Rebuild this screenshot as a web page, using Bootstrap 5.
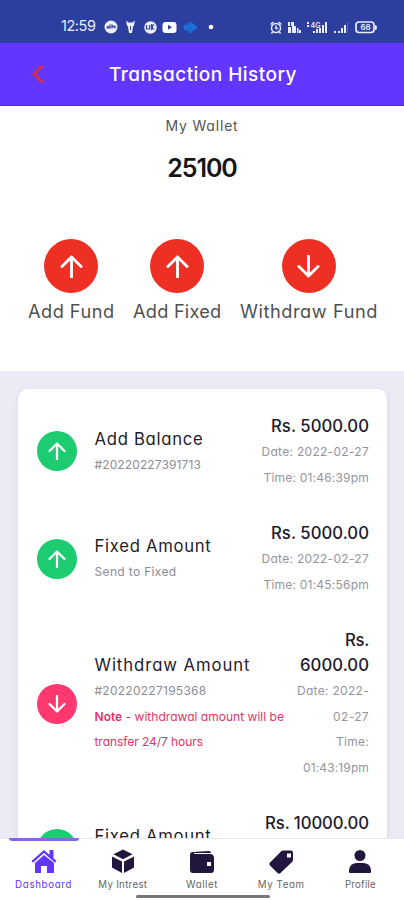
<!DOCTYPE html>
<html lang="en">
<head>
<meta charset="utf-8">
<meta name="viewport" content="width=device-width, initial-scale=1">
<title>Transaction History</title>
<link href="https://cdn.jsdelivr.net/npm/bootstrap@5.3.0/dist/css/bootstrap.min.css" rel="stylesheet">
<style>
body{font-family:Inter,"Open Sans",sans-serif;font-feature-settings:"cv11","ss03";background:#ebebf5;height:900px;overflow:hidden;color:#1c1b25}
svg{display:block;flex:none}
.status{height:43px;background:#2d3f9e;padding:10px 24px 0 61px;color:#e9ecff}
.clock{font-size:14.5px;line-height:20px;width:43px;padding-top:6px}
.appbar{height:63px;background:#6236ff;border-bottom:1px solid #4b20dd;padding:0 31px}
.appbar h1{font-size:19px;font-weight:500;line-height:24px;color:#fff;width:188px;margin-left:65px;padding-top:1px}
.wallet{height:265px;padding-top:10px;background:#fff}
.wlabel{font-size:14px;line-height:20px;color:#555}
.total{font-size:25px;font-weight:600;line-height:36px;margin-top:14px;color:#151515}
.actions{padding:0 26px 0 28px;margin-top:53px}
.round{border-radius:50%;display:flex;align-items:center;justify-content:center;flex:none}
.round.big{width:54px;height:54px;background:#ee2f24}
.round.mini{width:40px;height:40px;background:#1dcc70;margin-right:18px}
.round.mini.pink{background:#ff396f}
.alabel{font-size:18.2px;line-height:24px;color:#505050;margin-top:6px}
.history{margin:18px 17px 0 18px;border-radius:10px;padding:24.5px 18px 0 18.5px;background:#fff;height:511px;overflow:hidden;box-shadow:0 2px 5px rgba(60,50,110,.12)}
.entry{margin-bottom:31.5px}
.ttl{font-size:16.7px;line-height:25px;color:#1f1b29;padding-top:1px}
.ref{font-size:12px;line-height:25.5px;color:#8c8b96}
.ref.note-text{color:#e23367;width:196px}
.amount{font-size:16.7px;font-weight:500;line-height:24.7px;color:#211b2d}
.when{font-size:12px;line-height:25.5px;color:#95949c;position:relative;top:1px}
.narrow{width:74px}
.tabs{height:62px;background:#fff;border-top:1px solid #e6e5ee;padding:0 4px}
.tab{color:#666;font-size:9.7px;line-height:14px;padding-top:9px}
.tab svg{margin:0 auto 3px;color:#22163f}
.tab.current,.tab.current svg{color:#6236ff}
.marker{left:5px;top:-1px;width:70px;height:3px;border-radius:0 0 6px 6px;background:#8565f2}
.homebar{left:136px;bottom:2px;width:134px;height:3px;border-radius:2px;background:#777}
</style>
<script src="https://cdn.jsdelivr.net/npm/bootstrap@5.3.0/dist/js/bootstrap.bundle.min.js"></script>
</head>
<body>
<svg width="0" height="0" class="position-absolute"><defs>
<symbol id="up" viewBox="0 0 24 24"><path d="M12 23V2M2 12L12 2l10 10" fill="none" stroke="#fff" stroke-width="3" stroke-linecap="round" stroke-linejoin="round"/></symbol>
<symbol id="down" viewBox="0 0 24 24"><path d="M12 1v21M2 12l10 10 10-10" fill="none" stroke="#fff" stroke-width="3" stroke-linecap="round" stroke-linejoin="round"/></symbol>
</defs></svg>

<div class="status d-flex">
  <div class="clock"><span data-w="34.5">12:59</span></div>
  <svg width="112" height="18" viewBox="104 17 112 18" class="mt-2">
    <circle cx="111" cy="26" r="6.5" fill="#eef0ff"/><path d="M107 27.500q1-4 2 0m1-4v4m2-4v4m0-2h3v2" fill="none" stroke="#334593" stroke-width="1.300"/>
    <path d="M126 19.500l2.500 2h4l2.500-2-1 5-1 1-1 6.500h-3l-1-6.500-1-1z" fill="#eef0ff"/><path d="M130.500 25v4" stroke="#334593"/>
    <circle cx="150.500" cy="26.500" r="6.200" fill="#eef0ff"/><path d="M146.500 24v4h3v-4m2-1v6m3-5h-2v4h2" fill="none" stroke="#334593" stroke-width="1.200"/>
    <rect x="162.500" y="21" width="14" height="11" rx="3" fill="#fff"/><path d="M168 23.800v5l4-2.500z" fill="#334593"/>
    <path d="M185 25v3M187.700 23.500v5.500M190.400 22v9M193 23.500v5.500M195.500 25.500v2" stroke="#1c74e4" stroke-width="2.400" stroke-linecap="round"/>
    <circle cx="211" cy="26" r="2.300" fill="#fff"/>
  </svg>
  <svg width="112" height="18" viewBox="270 17 112 18" class="mt-2 ms-auto">
    <g fill="none" stroke="#e9ecff" stroke-width="1.500"><circle cx="278" cy="27" r="4.500"/><path d="M278 24.500v3h2M272.500 23.500l3-2.500m8 2.500l-3-2.500M274.500 31l-1 1.500m8-1.500l1 1.500"/></g>
    <g fill="#e9ecff"><path d="M290 21h2v4h-2zm3 0h3v4h-3zM290 26h3v6h-3zm4-1h4v7h-4zm5 2h1.500v5H299zm2 2h2v3h-2z"/>
    <path d="M309 21h2v2h-2zm0 3h2v2h-2zM315 30h2v2h-2zm3-2h2v4h-2zm3-1h2v5h-2zm3-3h2v8h-2zm3-3h2v11h-2z"/>
    <path d="M336 30h2v2h-2zm4 0h2v2h-2zm3-3h2v5h-2zm3-3h2v8h-2z"/><path d="M349 21h.6v11h-.6z" opacity=".4"/></g>
    <text x="312.500" y="26.500" font-size="7" font-weight="600" fill="#e9ecff">4G</text>
    <rect x="358" y="21" width="18" height="10.500" rx="3" fill="none" stroke="#e9ecff" stroke-width="1.700"/><path d="M377 24q2 0 2 2.500t-2 2.500z" fill="#e9ecff"/>
    <text x="362.500" y="29.300" font-size="8" font-weight="600" fill="#e9ecff">68</text>
  </svg>
</div>
<header class="appbar d-flex align-items-center">
  <svg width="13" height="22" viewBox="0 0 13 22"><path d="M11.500 2.500L3 11l8.500 8.500" fill="none" stroke="#d32c4c" stroke-width="3"/></svg>
  <h1 class="mb-0 text-nowrap"><span data-w="188">Transaction History</span></h1>
</header>
<section class="wallet text-center">
  <div class="wlabel"><span data-w="73">My Wallet</span></div>
  <div class="total"><span data-w="69.5">25100</span></div>
  <div class="actions d-flex justify-content-between text-nowrap">
    <div><div class="round big mx-auto"><svg width="23" height="23"><use href="#up"/></svg></div><div class="alabel"><span data-w="86.5">Add Fund</span></div></div>
    <div><div class="round big mx-auto"><svg width="23" height="23"><use href="#up"/></svg></div><div class="alabel"><span data-w="88.5">Add Fixed</span></div></div>
    <div><div class="round big mx-auto"><svg width="23" height="23"><use href="#down"/></svg></div><div class="alabel"><span data-w="138">Withdraw Fund</span></div></div>
  </div>
</section>
<main class="history">
  <div class="entry d-flex align-items-center text-nowrap">
    <div class="round mini"><svg width="18" height="18"><use href="#up"/></svg></div>
    <div><div class="ttl"><span data-w="109">Add Balance</span></div><div class="ref"><span data-w="106.5">#20220227391713</span></div></div>
    <div class="ms-auto text-end"><div class="amount"><span data-w="98">Rs. 5000.00</span></div><div class="when"><span data-w="107.5">Date: 2022-02-27</span></div><div class="when"><span data-w="105.5">Time: 01:46:39pm</span></div></div>
  </div>
  <div class="entry d-flex align-items-center text-nowrap">
    <div class="round mini"><svg width="18" height="18"><use href="#up"/></svg></div>
    <div><div class="ttl"><span data-w="117">Fixed Amount</span></div><div class="ref"><span data-w="82">Send to Fixed</span></div></div>
    <div class="ms-auto text-end"><div class="amount"><span data-w="98">Rs. 5000.00</span></div><div class="when"><span data-w="107.5">Date: 2022-02-27</span></div><div class="when"><span data-w="105.5">Time: 01:45:56pm</span></div></div>
  </div>
  <div class="entry d-flex align-items-center text-nowrap">
    <div class="round mini pink"><svg width="18" height="18"><use href="#down"/></svg></div>
    <div><div class="ttl"><span data-w="156">Withdraw Amount</span></div><div class="ref"><span data-w="112">#20220227195368</span></div><div class="ref note-text"><span data-w="189.5"><span class="fw-semibold">Note</span> - withdrawal amount will be</span><br><span data-w="108.5">transfer 24/7 hours</span></div></div>
    <div class="ms-auto text-end narrow"><div class="amount"><span data-w="24">Rs.</span><br><span data-w="69">6000.00</span></div><div class="when"><span data-w="72">Date: 2022-</span><br><span data-w="36">02-27</span></div><div class="when"><span data-w="33">Time:</span><br><span data-w="66">01:43:19pm</span></div></div>
  </div>
  <div class="entry d-flex align-items-center text-nowrap">
    <div class="round mini"><svg width="18" height="18"><use href="#up"/></svg></div>
    <div><div class="ttl"><span data-w="117">Fixed Amount</span></div><div class="ref"><span data-w="82">Send to Fixed</span></div></div>
    <div class="ms-auto text-end"><div class="amount"><span data-w="104">Rs. 10000.00</span></div><div class="when">&nbsp;</div><div class="when">&nbsp;</div></div>
  </div>
</main>
<nav class="tabs fixed-bottom d-flex text-center text-nowrap">
  <div class="marker position-absolute ms-1"></div>
  <div class="tab current col"><svg width="28" height="27" viewBox="0 0 28 27"><path fill="currentColor" d="M14 2L1.500 13l1.500 1.700L14 5l11 9.700 1.500-1.700-3-2.700V2h-4v4.700zM14 7l-9 8v10h6v-7h6v7h7V15z"/></svg><span data-w="57">Dashboard</span></div>
  <div class="tab col"><svg width="26" height="27" viewBox="0 0 26 27"><path fill="currentColor" d="M13 1.500l9.500 4.700-9.500 5-9.500-5zM2 8.500l10 5v11.500L2 19.500zm22 0l-10 5v11.500l10-5.500z"/></svg><span data-w="49">My Intrest</span></div>
  <div class="tab col"><svg width="28" height="27" viewBox="0 0 28 27"><path fill="currentColor" fill-rule="evenodd" d="M5 4l16-1q2 0 2 2H6v1h16q4 0 4 4v12q0 3-3 3H5q-3 0-3-3V7q0-3 3-3zm14 10v4h4v-4z"/></svg><span data-w="32">Wallet</span></div>
  <div class="tab col"><svg width="28" height="27" viewBox="0 0 28 27"><path fill="currentColor" fill-rule="evenodd" d="M16 2.500h8q2 0 2 2v7q0 1.500-1 2.500L13.500 25q-1.500 1.500-3 0L3 17.500q-1.500-1.500 0-3L14 3.500q1-1 2-1zm4 3v4h4v-4z"/></svg><span data-w="47">My Team</span></div>
  <div class="tab col"><svg width="26" height="27" viewBox="0 0 26 27"><circle cx="13" cy="7.500" r="5.500" fill="currentColor"/><path fill="currentColor" d="M2 24v-2q1-7 8-7h6q7 0 8 7v2q0 1-1 1H3q-1 0-1-1"/></svg><span data-w="31">Profile</span></div>
  <div class="homebar position-absolute"></div>
</nav>
<script>
// Tracks each label so that it fills its designed width.
document.querySelectorAll('[data-w]').forEach(function (el) {
  el.style.letterSpacing = '0px';
  var gap = (Number(el.dataset.w) - el.getBoundingClientRect().width) / el.textContent.length;
  el.style.letterSpacing = gap.toFixed(3) + 'px';
});
</script>
</body>
</html>
